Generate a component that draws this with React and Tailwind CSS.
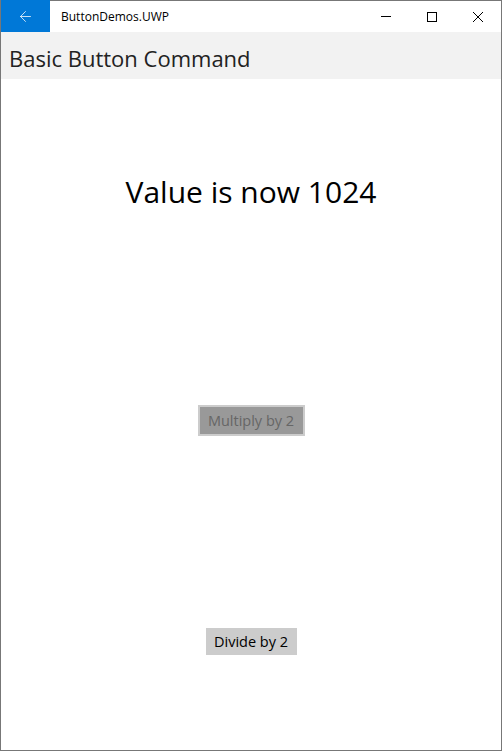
import { ArrowLeft } from 'lucide-react';

const FONT = { fontFamily: '"Segoe UI", "Open Sans", "Noto Sans", sans-serif' };

function TitleBar() {
  return (
    <div className="flex h-[32px] items-stretch bg-white">
      <div className="flex w-[49px] items-center justify-center bg-[#0078d7]">
        <ArrowLeft size={17} strokeWidth={1.1} className="text-white" />
      </div>
      <div className="flex flex-1 items-center border-t border-[#777] pl-[11px] text-[12px] text-black">
        ButtonDemos.UWP
      </div>
      <div className="flex border-t border-[#777]">
        <div className="flex w-[46px] items-center justify-center">
          <div className="h-px w-[10px] bg-black" />
        </div>
        <div className="flex w-[46px] items-center justify-center">
          <div className="h-[10px] w-[10px] border border-black" />
        </div>
        <div className="flex w-[46px] items-center justify-center">
          <svg width="10" height="10" viewBox="0 0 10 10" stroke="black" strokeWidth="1">
            <path d="M0 0L10 10M10 0L0 10" />
          </svg>
        </div>
      </div>
    </div>
  );
}

export default function App() {
  return (
    <div style={FONT} className="flex h-[751px] w-[502px] flex-col border-x border-b border-[#777] bg-white">
      <TitleBar />
      <div className="flex h-[47px] items-center bg-[#f2f2f2] pl-[8px] pt-[5px] text-[22px] text-[#222]">
        Basic Button Command
      </div>
      <div className="flex flex-1 flex-col">
        <div className="flex flex-1 items-center justify-center pt-[4px] text-[30px] text-black">
          Value is now 1024
        </div>
        <div className="flex flex-1 items-center justify-center pt-[12px]">
          <button disabled className="flex h-[31px] w-[107px] items-center justify-center border-2 border-[#ccc] bg-[#999] text-[14.5px] text-[#666]">
            Multiply by 2
          </button>
        </div>
        <div className="flex flex-1 items-center justify-center pt-[4px]">
          <button className="flex h-[27px] w-[91px] items-center justify-center bg-[#ccc] text-[14.5px] text-black">
            Divide by 2
          </button>
        </div>
      </div>
    </div>
  );
}
